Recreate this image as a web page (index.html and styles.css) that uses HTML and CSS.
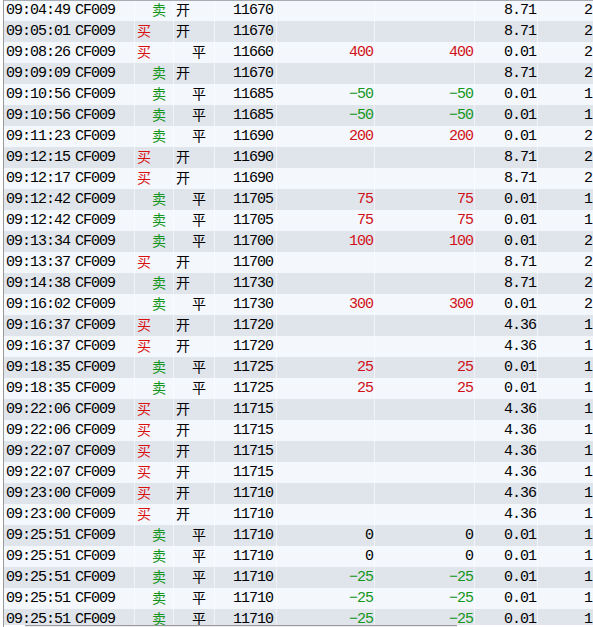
FILE: index.html
```html
<!DOCTYPE html>
<html lang="zh-CN">
<head>
<meta charset="utf-8">
<title>成交明细</title>
<link rel="stylesheet" href="styles.css">
</head>
<body>
<div class="frame">
  <div class="list">
    <div class="row"><span>09:04:49</span><span>CF009</span><span class="sell">卖</span><span class="open">开</span><span class="num">11670</span><span class="num"></span><span class="num"></span><span class="num">8.71</span><span class="num">2</span></div>
    <div class="row"><span>09:05:01</span><span>CF009</span><span class="buy">买</span><span class="open">开</span><span class="num">11670</span><span class="num"></span><span class="num"></span><span class="num">8.71</span><span class="num">2</span></div>
    <div class="row"><span>09:08:26</span><span>CF009</span><span class="buy">买</span><span class="close">平</span><span class="num">11660</span><span class="num up">400</span><span class="num up">400</span><span class="num">0.01</span><span class="num">2</span></div>
    <div class="row"><span>09:09:09</span><span>CF009</span><span class="sell">卖</span><span class="open">开</span><span class="num">11670</span><span class="num"></span><span class="num"></span><span class="num">8.71</span><span class="num">2</span></div>
    <div class="row"><span>09:10:56</span><span>CF009</span><span class="sell">卖</span><span class="close">平</span><span class="num">11685</span><span class="num down">−50</span><span class="num down">−50</span><span class="num">0.01</span><span class="num">1</span></div>
    <div class="row"><span>09:10:56</span><span>CF009</span><span class="sell">卖</span><span class="close">平</span><span class="num">11685</span><span class="num down">−50</span><span class="num down">−50</span><span class="num">0.01</span><span class="num">1</span></div>
    <div class="row"><span>09:11:23</span><span>CF009</span><span class="sell">卖</span><span class="close">平</span><span class="num">11690</span><span class="num up">200</span><span class="num up">200</span><span class="num">0.01</span><span class="num">2</span></div>
    <div class="row"><span>09:12:15</span><span>CF009</span><span class="buy">买</span><span class="open">开</span><span class="num">11690</span><span class="num"></span><span class="num"></span><span class="num">8.71</span><span class="num">2</span></div>
    <div class="row"><span>09:12:17</span><span>CF009</span><span class="buy">买</span><span class="open">开</span><span class="num">11690</span><span class="num"></span><span class="num"></span><span class="num">8.71</span><span class="num">2</span></div>
    <div class="row"><span>09:12:42</span><span>CF009</span><span class="sell">卖</span><span class="close">平</span><span class="num">11705</span><span class="num up">75</span><span class="num up">75</span><span class="num">0.01</span><span class="num">1</span></div>
    <div class="row"><span>09:12:42</span><span>CF009</span><span class="sell">卖</span><span class="close">平</span><span class="num">11705</span><span class="num up">75</span><span class="num up">75</span><span class="num">0.01</span><span class="num">1</span></div>
    <div class="row"><span>09:13:34</span><span>CF009</span><span class="sell">卖</span><span class="close">平</span><span class="num">11700</span><span class="num up">100</span><span class="num up">100</span><span class="num">0.01</span><span class="num">2</span></div>
    <div class="row"><span>09:13:37</span><span>CF009</span><span class="buy">买</span><span class="open">开</span><span class="num">11700</span><span class="num"></span><span class="num"></span><span class="num">8.71</span><span class="num">2</span></div>
    <div class="row"><span>09:14:38</span><span>CF009</span><span class="sell">卖</span><span class="open">开</span><span class="num">11730</span><span class="num"></span><span class="num"></span><span class="num">8.71</span><span class="num">2</span></div>
    <div class="row"><span>09:16:02</span><span>CF009</span><span class="sell">卖</span><span class="close">平</span><span class="num">11730</span><span class="num up">300</span><span class="num up">300</span><span class="num">0.01</span><span class="num">2</span></div>
    <div class="row"><span>09:16:37</span><span>CF009</span><span class="buy">买</span><span class="open">开</span><span class="num">11720</span><span class="num"></span><span class="num"></span><span class="num">4.36</span><span class="num">1</span></div>
    <div class="row"><span>09:16:37</span><span>CF009</span><span class="buy">买</span><span class="open">开</span><span class="num">11720</span><span class="num"></span><span class="num"></span><span class="num">4.36</span><span class="num">1</span></div>
    <div class="row"><span>09:18:35</span><span>CF009</span><span class="sell">卖</span><span class="close">平</span><span class="num">11725</span><span class="num up">25</span><span class="num up">25</span><span class="num">0.01</span><span class="num">1</span></div>
    <div class="row"><span>09:18:35</span><span>CF009</span><span class="sell">卖</span><span class="close">平</span><span class="num">11725</span><span class="num up">25</span><span class="num up">25</span><span class="num">0.01</span><span class="num">1</span></div>
    <div class="row"><span>09:22:06</span><span>CF009</span><span class="buy">买</span><span class="open">开</span><span class="num">11715</span><span class="num"></span><span class="num"></span><span class="num">4.36</span><span class="num">1</span></div>
    <div class="row"><span>09:22:06</span><span>CF009</span><span class="buy">买</span><span class="open">开</span><span class="num">11715</span><span class="num"></span><span class="num"></span><span class="num">4.36</span><span class="num">1</span></div>
    <div class="row"><span>09:22:07</span><span>CF009</span><span class="buy">买</span><span class="open">开</span><span class="num">11715</span><span class="num"></span><span class="num"></span><span class="num">4.36</span><span class="num">1</span></div>
    <div class="row"><span>09:22:07</span><span>CF009</span><span class="buy">买</span><span class="open">开</span><span class="num">11715</span><span class="num"></span><span class="num"></span><span class="num">4.36</span><span class="num">1</span></div>
    <div class="row"><span>09:23:00</span><span>CF009</span><span class="buy">买</span><span class="open">开</span><span class="num">11710</span><span class="num"></span><span class="num"></span><span class="num">4.36</span><span class="num">1</span></div>
    <div class="row"><span>09:23:00</span><span>CF009</span><span class="buy">买</span><span class="open">开</span><span class="num">11710</span><span class="num"></span><span class="num"></span><span class="num">4.36</span><span class="num">1</span></div>
    <div class="row"><span>09:25:51</span><span>CF009</span><span class="sell">卖</span><span class="close">平</span><span class="num">11710</span><span class="num">0</span><span class="num">0</span><span class="num">0.01</span><span class="num">1</span></div>
    <div class="row"><span>09:25:51</span><span>CF009</span><span class="sell">卖</span><span class="close">平</span><span class="num">11710</span><span class="num">0</span><span class="num">0</span><span class="num">0.01</span><span class="num">1</span></div>
    <div class="row"><span>09:25:51</span><span>CF009</span><span class="sell">卖</span><span class="close">平</span><span class="num">11710</span><span class="num down">−25</span><span class="num down">−25</span><span class="num">0.01</span><span class="num">1</span></div>
    <div class="row"><span>09:25:51</span><span>CF009</span><span class="sell">卖</span><span class="close">平</span><span class="num">11710</span><span class="num down">−25</span><span class="num down">−25</span><span class="num">0.01</span><span class="num">1</span></div>
    <div class="row"><span>09:25:51</span><span>CF009</span><span class="sell">卖</span><span class="close">平</span><span class="num">11710</span><span class="num down">−25</span><span class="num down">−25</span><span class="num">0.01</span><span class="num">1</span></div>
  </div>
  <div class="hscroll"><div class="hbtn"></div><div class="hthumb"></div></div>
</div>
</body>
</html>
```
FILE: styles.css
```css
html, body {
  margin: 0;
  padding: 0;
  background: #ffffff;
}
body {
  width: 593px;
  height: 627px;
  overflow: hidden;
}
.frame {
  margin-left: 3px;
  border-left: 1px solid #9a9a9a;
}
.list {
  height: 625px;
  overflow: hidden;
}
.row {
  display: grid;
  grid-template-columns: 69px 62px 39px 41px 62px 98px 100px 63px 55px;
  height: 21px;
  line-height: 21px;
  font-family: "Liberation Mono", "Noto Sans CJK SC", monospace;
  font-size: 15px;
  letter-spacing: -1px;
  color: #000;
  background: #f4f7fc;
}
.row:first-child {
  height: 21px;
  border-top: 1px solid #a8acb4;
  box-sizing: border-box;
  line-height: 20px;
}
.row:nth-child(even) {
  background: #e0e4eb;
}
.row > span {
  display: block;
  white-space: nowrap;
  padding-left: 2px;
  border-right: 1px solid rgba(255, 255, 255, 0.55);
}
.row > span:nth-child(1) {
  border-right: none;
}
.row > span.num {
  text-align: right;
  padding-left: 0;
  padding-right: 1px;
}
.row > span:nth-child(5) {
  padding-right: 3px;
}
.row > span:last-child {
  border-right: none;
}
.buy, .sell, .open, .close {
  font-family: "Noto Sans CJK SC", sans-serif;
  font-size: 14px;
  letter-spacing: 0;
  line-height: 16px;
  padding-top: 1px;
}
.row:first-child .buy,
.row:first-child .sell,
.row:first-child .open,
.row:first-child .close {
  line-height: 16px;
  padding-top: 0;
}
.buy { color: #d81010; }
.sell { color: #13951a; padding-left: 17px !important; }
.close { padding-left: 18px !important; }
.up { color: #d01018; }
.down { color: #14961c; }
.hscroll {
  display: flex;
  height: 20px;
}
.hbtn {
  width: 21px;
}
.hthumb {
  width: 432px;
  border-top: 1px solid #9a9a9a;
  background: #ececec;
}
```
